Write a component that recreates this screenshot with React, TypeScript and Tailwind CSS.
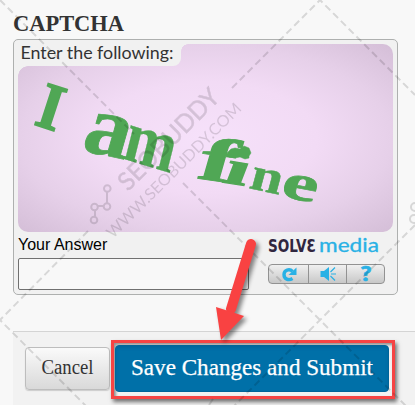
import React from "react";

type Glyph = { c: string; x: number; y: number; r: number; skew: number; size: number; w: number; weight: number };

const glyphs: Glyph[] = [
  { c: "I", x: 33, y: 124, r: 18, skew: 0, size: 66, w: 24, weight: 1.8 },
  { c: "a", x: 80, y: 150, r: 12, skew: -4, size: 86, w: 46, weight: 0.8 },
  { c: "m", x: 121, y: 158, r: 17, skew: 3, size: 74, w: 52, weight: 0.3 },
  { c: "f", x: 195, y: 178, r: 8, skew: -8, size: 62, w: 36, weight: 0.8 },
  { c: "ı", x: 221, y: 182, r: 9, skew: -12, size: 48, w: 24, weight: 1.2 },
  { c: "n", x: 248, y: 188, r: 12, skew: -3, size: 47, w: 32, weight: 0.5 },
  { c: "e", x: 279, y: 196, r: 11, skew: -5, size: 51, w: 36, weight: 0.6 },
];

function Captcha() {
  return (
    <div className="relative h-[188px] w-[375px] rounded-[10px] bg-[radial-gradient(ellipse_at_center,#f6e1fa_0%,#f2dbf5_42%,#e6d0e9_70%,#d4bed7_100%)]">
      <div className="h-[22px] w-[163px] rounded-br-[8px] bg-[#f1f1f1]">
        <svg width="163" height="22" className="block overflow-visible">
          <text x="2.5" y="15" fontSize="17" fill="#333" fontFamily="Lato, sans-serif" textLength="153" lengthAdjust="spacingAndGlyphs">
            Enter the following:
          </text>
        </svg>
      </div>
      <div className="absolute left-0 top-[22px] size-[10px] bg-[radial-gradient(circle_at_bottom_right,transparent_9.5px,#f1f1f1_10px)]" />
      <div className="absolute left-[163px] top-0 size-[7px] bg-[radial-gradient(circle_at_bottom_right,transparent_6.5px,#f1f1f1_7px)]" />
      <svg className="absolute left-0 top-0" width="375" height="188" viewBox="18 44 375 188">
        <g fill="#50a755" stroke="#50a755" fontFamily="'Liberation Serif', serif" fontWeight="700">
          {glyphs.map((g) => (
            <text key={g.c} fontSize={g.size} strokeWidth={g.weight} textLength={g.w} lengthAdjust="spacingAndGlyphs" transform={`translate(${g.x} ${g.y}) rotate(${g.r}) skewX(${g.skew})`}>
              {g.c}
            </text>
          ))}
          <path strokeWidth="0.5" d="M227 153l4-4 4-1 5 1 4-3 5 2 2 5-2 3v2l-4 1-5-2-5 1-6-1z" />
        </g>
      </svg>
    </div>
  );
}

function SolveMedia() {
  return (
    <div className="w-[117px]">
      <svg width="117" height="20" viewBox="0 0 117 20" className="block overflow-visible">
        <text x="0" y="14.5" fontFamily="'DejaVu Sans', sans-serif" fontWeight="700" fontSize="17" fill="#30263f" textLength="48" lengthAdjust="spacingAndGlyphs">SOLVƐ</text>
        <text x="51" y="14.5" fontFamily="Lato, sans-serif" fontSize="19" fill="#29b1e5" stroke="#29b1e5" strokeWidth=".3" textLength="60" lengthAdjust="spacingAndGlyphs">media</text>
      </svg>
      <div className="mt-[7px] flex h-5 rounded-[4px] border border-[#929292] bg-gradient-to-b from-[#f0f0f0] to-[#c8c8c8]">
        <div className="flex w-10 items-center justify-center border-r border-[#929292]">
          <svg width="18" height="16" viewBox="0 0 18 16"><path d="M12.5 12.5C8.5 15 4 13 4 8.5C4 4 9.5 2.2 12.5 5.5" fill="none" stroke="#29b1e5" strokeWidth="3.4" /><path d="M16.5 1.5V9H8.5z" fill="#29b1e5" /></svg>
        </div>
        <div className="flex w-[38px] items-center justify-center border-r border-[#929292]">
          <svg width="18" height="16" viewBox="0 0 18 16"><path d="M1.5 5h3.5l5-4v14l-5-4H1.5z" fill="#29b1e5" /><path d="M11.5 6L16 1.5M12 8h5M11.5 10l4.5 4.5" stroke="#29b1e5" strokeWidth="1.2" /></svg>
        </div>
        <div className="flex flex-1 items-center justify-center">
          <svg width="14" height="18" className="overflow-visible"><text x="1.5" y="16" fontFamily="Lato, sans-serif" fontWeight="900" fontSize="20" fill="#29b1e5" stroke="#29b1e5" strokeWidth=".7" textLength="11" lengthAdjust="spacingAndGlyphs">?</text></svg>
        </div>
      </div>
    </div>
  );
}

function Watermark() {
  return (
    <svg className="pointer-events-none absolute inset-0" width="415" height="405" opacity="0.13">
      <g fill="none" stroke="#000" strokeWidth="2" strokeDasharray="7 4">
        <path d="M0 0L134 134M183 183L320 320L415 415M232 88L320 0L415 95M88 231L0 320L90 410M415 225L230 410" />
      </g>
      <g fill="none" stroke="#000" strokeWidth="2">
        <path d="M107 192v11M104 206h-6M95 210v7" />
        <circle cx="107.3" cy="188.5" r="3.3" />
        <circle cx="107" cy="206.5" r="3.3" />
        <circle cx="94.5" cy="207" r="3.3" />
        <circle cx="94" cy="220" r="3.3" />
        <circle cx="415" cy="207" r="4" />
        <circle cx="414" cy="219" r="4" />
        <path d="M209 405l4-6" />
      </g>
      <text transform="translate(128 192) rotate(-45)" fontFamily="Lato, sans-serif" fontSize="25" stroke="#000" strokeWidth=".5" textLength="132" lengthAdjust="spacingAndGlyphs">SEOBUDDY</text>
      <text transform="translate(113 239) rotate(-45)" fontFamily="Lato, sans-serif" fontSize="16" textLength="183" lengthAdjust="spacingAndGlyphs">WWW.SEOBUDDY.COM</text>
    </svg>
  );
}

export default function App() {
  return (
    <main className="relative h-[405px] w-[415px] overflow-hidden bg-[#f8f8f8] pl-[13px]">
      <h1 className="h-[39px] pt-[9px] font-['Liberation_Serif',serif] text-[22px] font-bold leading-[30px] text-[#333]">
        <svg width="120" height="30" className="block"><text x="0" y="22" fontSize="22.5" fill="#333" textLength="111" lengthAdjust="spacingAndGlyphs">CAPTCHA</text></svg>
      </h1>
      <section className="h-[256px] w-[385px] rounded-[5px] border border-[#aeb0af] bg-[#f1f1f1] p-1">
        <Captcha />
        <div className="flex justify-between pr-2">
          <label className="block w-[231px] font-['Liberation_Sans',sans-serif] text-[16px] leading-[26px] text-black">
            Your Answer
            <input className="block h-8 w-[231px] rounded-[2px] border border-[#707070] bg-[#f8f8f8]" />
          </label>
          <div className="pt-[5px]"><SolveMedia /></div>
        </div>
      </section>
      <footer className="mt-[36px] flex h-[80px] border-t border-[#d4d4d4] bg-[#f2f2f2] pl-3 font-['Liberation_Serif',serif]">
        <button className="mt-[15px] h-[43px] w-[85px] rounded-[4px] border border-[#bdbdbd] bg-gradient-to-b from-[#fafafa] to-[#d9d9d9] shadow-[0_1px_1px_#ccc]">
          <svg width="83" height="41" className="block"><text x="15.5" y="26" fontSize="20" fill="#333" textLength="52" lengthAdjust="spacingAndGlyphs">Cancel</text></svg>
        </button>
        <div className="ml-px mt-[8px] h-[59px] w-[284px] border-[3px] border-[#f64444] pl-px pt-[2px] shadow-[2px_3px_4px_#0008,inset_2px_2px_3px_#0006]">
          <button className="block h-[47px] w-[274px] rounded-[4px] border border-[#00659a] bg-[#0070a8] shadow-[inset_0_2px_3px_#0050804d]">
            <svg width="272" height="45" className="block"><text x="15" y="29" fontSize="22.5" fill="#fff" stroke="#fff" strokeWidth=".25" textLength="242" lengthAdjust="spacingAndGlyphs">Save Changes and Submit</text></svg>
          </button>
        </div>
      </footer>
      <Watermark />
      <svg className="absolute inset-0 drop-shadow-[3px_3px_2px_#0007]" width="415" height="405">
        <path d="M251 244L231 309" stroke="#f94242" strokeWidth="10" strokeLinecap="round" />
        <path d="M216 307L244 316L221 340z" fill="#f94242" />
      </svg>
    </main>
  );
}
